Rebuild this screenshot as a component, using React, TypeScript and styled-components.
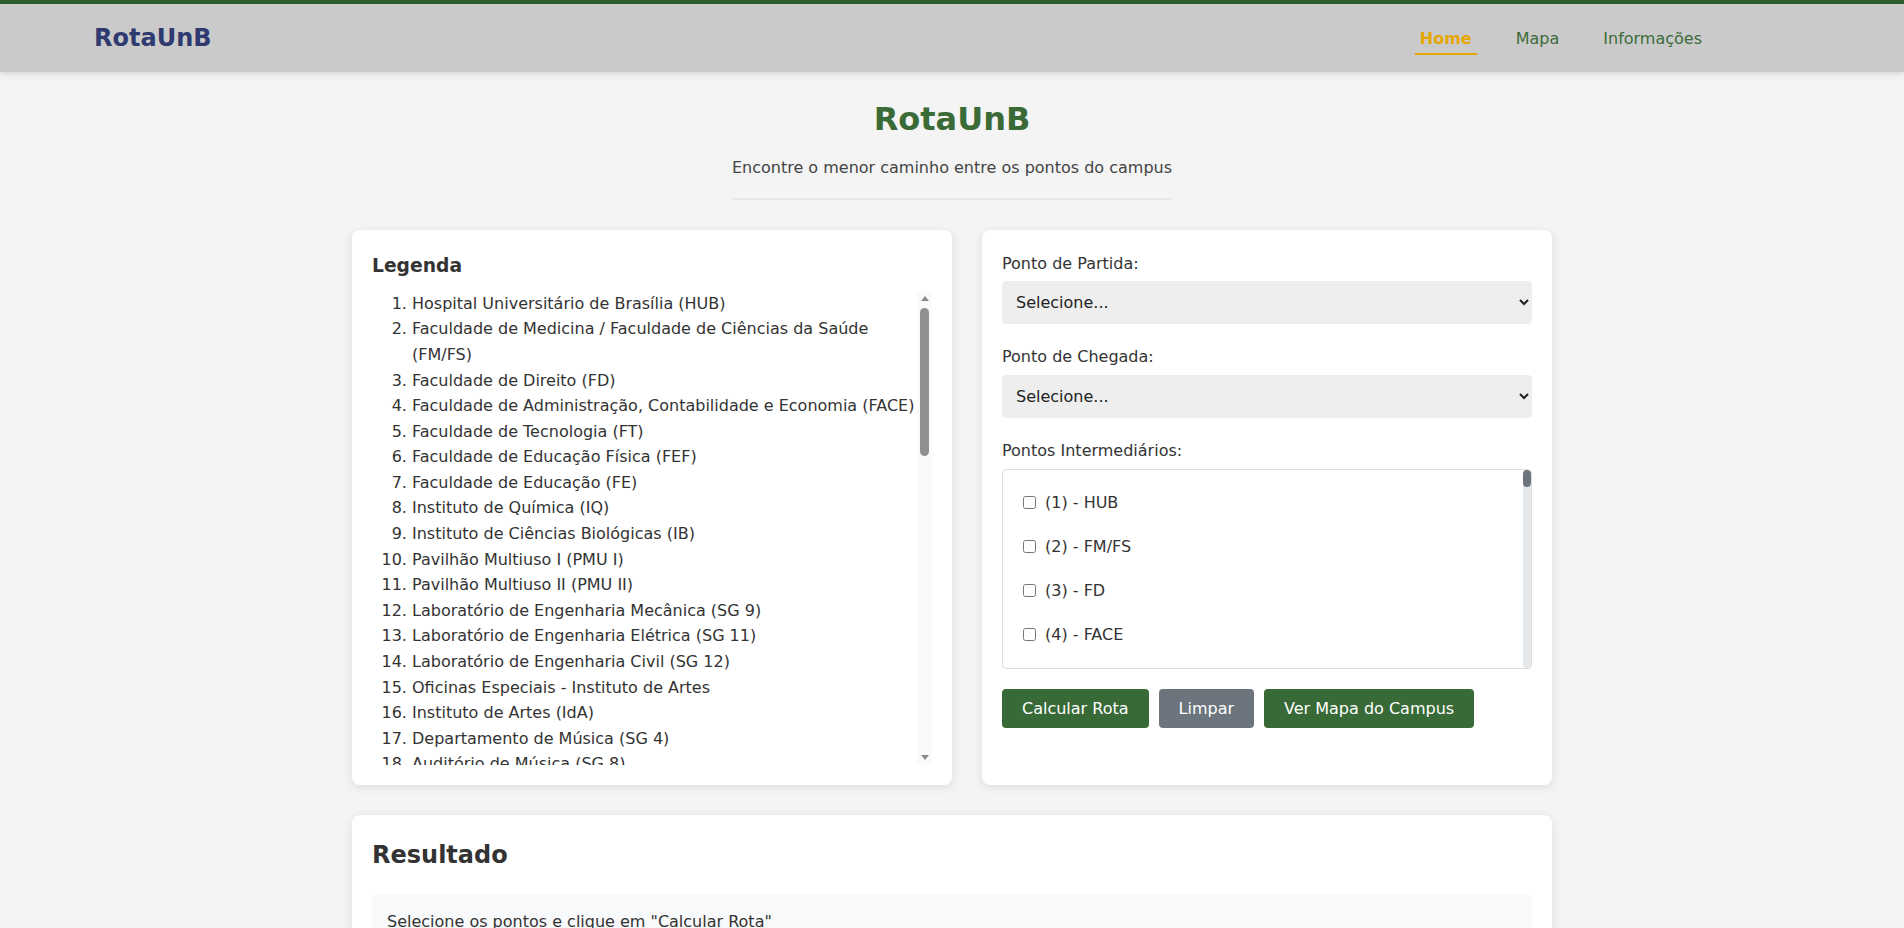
import React from "react";
import styled, { createGlobalStyle } from "styled-components";

const GlobalStyle = createGlobalStyle`
  html { scrollbar-width: none; }
  body {
    margin: 0;
    font-family: "DejaVu Sans", Verdana, sans-serif;
    background: #f4f4f4;
    color: #333;
    line-height: 1.6;
  }
`;

type Point = { name: string; abbr: string };

const POINTS: Point[] = [
  { name: "Hospital Universitário de Brasília (HUB)", abbr: "HUB" },
  { name: "Faculdade de Medicina / Faculdade de Ciências da Saúde (FM/FS)", abbr: "FM/FS" },
  { name: "Faculdade de Direito (FD)", abbr: "FD" },
  { name: "Faculdade de Administração, Contabilidade e Economia (FACE)", abbr: "FACE" },
  { name: "Faculdade de Tecnologia (FT)", abbr: "FT" },
  { name: "Faculdade de Educação Física (FEF)", abbr: "FEF" },
  { name: "Faculdade de Educação (FE)", abbr: "FE" },
  { name: "Instituto de Química (IQ)", abbr: "IQ" },
  { name: "Instituto de Ciências Biológicas (IB)", abbr: "IB" },
  { name: "Pavilhão Multiuso I (PMU I)", abbr: "PMU I" },
  { name: "Pavilhão Multiuso II (PMU II)", abbr: "PMU II" },
  { name: "Laboratório de Engenharia Mecânica (SG 9)", abbr: "SG 9" },
  { name: "Laboratório de Engenharia Elétrica (SG 11)", abbr: "SG 11" },
  { name: "Laboratório de Engenharia Civil (SG 12)", abbr: "SG 12" },
  { name: "Oficinas Especiais - Instituto de Artes", abbr: "OE" },
  { name: "Instituto de Artes (IdA)", abbr: "IdA" },
  { name: "Departamento de Música (SG 4)", abbr: "SG 4" },
  { name: "Auditório de Música (SG 8)", abbr: "SG 8" },
  { name: "Instituto Central de Ciências - Ala Norte (ICC Norte)", abbr: "ICC Norte" },
  { name: "Instituto Central de Ciências - Ala Sul (ICC Sul)", abbr: "ICC Sul" },
  { name: "Biblioteca Central (BCE)", abbr: "BCE" },
  { name: "Restaurante Universitário (RU)", abbr: "RU" },
  { name: "Reitoria", abbr: "Reitoria" },
  { name: "Faculdade de Arquitetura e Urbanismo (FAU)", abbr: "FAU" },
  { name: "Faculdade de Comunicação (FAC)", abbr: "FAC" },
  { name: "Instituto de Ciências Sociais (ICS)", abbr: "ICS" },
  { name: "Instituto de Letras (IL)", abbr: "IL" },
  { name: "Instituto de Psicologia (IP)", abbr: "IP" },
  { name: "Instituto de Física (IF)", abbr: "IF" },
  { name: "Instituto de Geociências (IG)", abbr: "IG" },
  { name: "Departamento de Matemática (MAT)", abbr: "MAT" },
  { name: "Centro Comunitário Athos Bulcão", abbr: "CCAB" },
  { name: "Memorial Darcy Ribeiro (Beijódromo)", abbr: "Beijódromo" },
  { name: "Casa do Estudante Universitário (CEU)", abbr: "CEU" },
  { name: "Centro Olímpico (CO)", abbr: "CO" },
  { name: "Prefeitura do Campus (PRC)", abbr: "PRC" },
  { name: "Centro de Excelência em Turismo (CET)", abbr: "CET" },
  { name: "Faculdade de Ciência da Informação (FCI)", abbr: "FCI" },
  { name: "Instituto de Ciências Humanas (ICH)", abbr: "ICH" },
  { name: "Instituto de Ciência Política (IPOL)", abbr: "IPOL" },
  { name: "Instituto de Relações Internacionais (IREL)", abbr: "IREL" },
  { name: "Faculdade de Agronomia e Medicina Veterinária (FAV)", abbr: "FAV" },
  { name: "Hospital Veterinário (HVet)", abbr: "HVet" },
  { name: "Centro de Desenvolvimento Sustentável (CDS)", abbr: "CDS" },
  { name: "Pavilhão Anísio Teixeira (PAT)", abbr: "PAT" },
  { name: "Pavilhão João Calmon (PJC)", abbr: "PJC" },
  { name: "Núcleo de Medicina Tropical (NMT)", abbr: "NMT" },
  { name: "Departamento de Ciência da Computação (CIC)", abbr: "CIC" },
  { name: "Ponto de Ônibus - L2 Norte", abbr: "L2" },
  { name: "Ceubinho", abbr: "Ceubinho" },
];

const Header = styled.header`
  box-sizing: border-box;
  height: 72px;
  border-top: 4px solid #2d5e2f;
  background: #cacaca;
  padding: 0 94px;
  display: flex;
  align-items: center;
  justify-content: space-between;
  box-shadow: 0 2px 6px rgba(0, 0, 0, 0.12);
  position: relative;
`;

const Logo = styled.div`
  font-size: 24px;
  font-weight: bold;
  color: #2f3a70;
`;

const Nav = styled.nav`
  display: flex;
  gap: 34px;
  margin-right: 103px;
`;

const NavLink = styled.a<{ $active?: boolean }>`
  font-size: 16px;
  text-decoration: none;
  padding: 5px 5px 2px;
  border-bottom: 2px solid ${(p) => (p.$active ? "#e5a600" : "transparent")};
  color: ${(p) => (p.$active ? "#e5a600" : "#3c6b3c")};
  font-weight: ${(p) => (p.$active ? "bold" : "normal")};
  cursor: pointer;
`;

const Main = styled.main`
  max-width: 1200px;
  margin: 0 auto;
`;

const Intro = styled.section`
  display: flex;
  flex-direction: column;
  align-items: center;
  margin-top: 22px;
`;

const IntroInner = styled.div`
  width: fit-content;
  text-align: center;
  border-bottom: 2px solid #e8e8e8;
  padding-bottom: 17px;
  margin-bottom: 30px;
`;

const Title = styled.h1`
  margin: 0;
  font-size: 32px;
  color: #3a6b37;
`;

const Subtitle = styled.p`
  margin: 10px 0 0;
  font-size: 16px;
  color: #444;
`;

const Columns = styled.div`
  display: grid;
  grid-template-columns: 600px 1fr;
  gap: 30px;
`;

const Card = styled.div`
  background: #fff;
  border-radius: 8px;
  padding: 21px 20px 20px;
  box-shadow: 0 2px 10px rgba(0, 0, 0, 0.1);
`;

const ResultCard = styled(Card)`
  margin-top: 30px;
`;

const CardTitle = styled.h3`
  margin: 0 0 10px;
  font-size: 18.72px;
  color: #333;
`;

const LegendScroll = styled.div`
  display: flex;
  height: 474px;
`;

const LegendList = styled.ol`
  flex: 1;
  margin: 0;
  padding-left: 40px;
  overflow: hidden;
  font-size: 16px;
`;

const ClassicTrack = styled.div`
  width: 15px;
  flex: none;
  background: #fafafa;
  display: flex;
  flex-direction: column;
  align-items: center;
`;

const ArrowButton = styled.div`
  height: 15px;
  flex: none;
  display: flex;
  align-items: center;
  justify-content: center;
`;

const ClassicThumb = styled.div<{ $offset: number; $size: number }>`
  width: 9px;
  height: ${(p) => p.$size}px;
  margin-top: ${(p) => p.$offset}px;
  border-radius: 5px;
  background: #8f8f8f;
`;

const TrackSpace = styled.div`
  flex: 1;
`;

const FormGroup = styled.div`
  margin-bottom: 20px;
`;

const Label = styled.label`
  display: block;
  margin-bottom: 5px;
  font-size: 16px;
  color: #333;
`;

const Select = styled.select`
  width: 100%;
  height: 43px;
  box-sizing: border-box;
  padding: 0 10px;
  background-color: #eee;
  border: none;
  border-radius: 4px;
  font-family: "DejaVu Sans", Verdana, sans-serif;
  font-size: 16px;
  color: #222;
`;

const CheckBox = styled.div`
  box-sizing: border-box;
  height: 200px;
  border: 1px solid #ddd;
  border-radius: 4px;
  display: flex;
  overflow: hidden;
`;

const CheckList = styled.div`
  flex: 1;
  overflow: hidden;
  padding: 11px 10px;
`;

const SlimTrack = styled.div`
  width: 8px;
  flex: none;
  background: #e6e9ec;
  border-radius: 4px;
`;

const SlimThumb = styled.div`
  height: 17px;
  border-radius: 4px;
  background: #6c757d;
`;

const CheckItem = styled.label`
  display: flex;
  align-items: center;
  height: 44px;
  padding: 0 6px;
  font-size: 16px;
  color: #333;

  input {
    margin: 3px 9px 3px 4px;
    width: 13px;
    height: 13px;
  }
`;

const ButtonRow = styled.div`
  display: flex;
  gap: 10px;
`;

const Button = styled.button<{ $variant?: "primary" | "secondary" }>`
  padding: 10px 20px;
  border: none;
  border-radius: 4px;
  background: ${(p) => (p.$variant === "secondary" ? "#6c757d" : "#376a37")};
  color: #fff;
  font-family: "DejaVu Sans", Verdana, sans-serif;
  font-size: 16px;
  line-height: normal;
  cursor: pointer;
`;

const ResultTitle = styled.h2`
  margin: 0 0 20px;
  font-size: 24px;
  color: #333;
`;

const ResultBox = styled.div`
  background: #f8f9fa;
  border-radius: 4px;
  padding: 15px;
  min-height: 60px;
`;

const ResultText = styled.p`
  margin: 0;
  font-size: 16px;
  color: #333;
`;

function Arrow({ dir }: { dir: "up" | "down" }) {
  return (
    <ArrowButton>
      <svg width="8" height="5" viewBox="0 0 8 5">
        <polygon
          points={dir === "up" ? "0,5 8,5 4,0" : "0,0 8,0 4,5"}
          fill="#8a8a8a"
        />
      </svg>
    </ArrowButton>
  );
}

export default function App() {
  return (
    <>
      <GlobalStyle />
      <Header>
        <Logo>RotaUnB</Logo>
        <Nav>
          <NavLink $active>Home</NavLink>
          <NavLink>Mapa</NavLink>
          <NavLink>Informações</NavLink>
        </Nav>
      </Header>
      <Main>
        <Intro>
          <IntroInner>
            <Title>RotaUnB</Title>
            <Subtitle>Encontre o menor caminho entre os pontos do campus</Subtitle>
          </IntroInner>
        </Intro>
        <Columns>
          <Card>
            <CardTitle>Legenda</CardTitle>
            <LegendScroll>
              <LegendList>
                {POINTS.map((p) => (
                  <li key={p.name}>{p.name}</li>
                ))}
              </LegendList>
              <ClassicTrack>
                <Arrow dir="up" />
                <ClassicThumb $offset={2} $size={148} />
                <TrackSpace />
                <Arrow dir="down" />
              </ClassicTrack>
            </LegendScroll>
          </Card>
          <Card>
            <FormGroup>
              <Label htmlFor="partida">Ponto de Partida:</Label>
              <Select id="partida" defaultValue="">
                <option value="">Selecione...</option>
                {POINTS.map((p, i) => (
                  <option key={p.name} value={i + 1}>
                    ({i + 1}) - {p.abbr}
                  </option>
                ))}
              </Select>
            </FormGroup>
            <FormGroup>
              <Label htmlFor="chegada">Ponto de Chegada:</Label>
              <Select id="chegada" defaultValue="">
                <option value="">Selecione...</option>
                {POINTS.map((p, i) => (
                  <option key={p.name} value={i + 1}>
                    ({i + 1}) - {p.abbr}
                  </option>
                ))}
              </Select>
            </FormGroup>
            <FormGroup>
              <Label>Pontos Intermediários:</Label>
              <CheckBox>
                <CheckList>
                  {POINTS.slice(0, 5).map((p, i) => (
                    <CheckItem key={p.name}>
                      <input type="checkbox" />
                      ({i + 1}) - {p.abbr}
                    </CheckItem>
                  ))}
                </CheckList>
                <SlimTrack>
                  <SlimThumb />
                </SlimTrack>
              </CheckBox>
            </FormGroup>
            <ButtonRow>
              <Button>Calcular Rota</Button>
              <Button $variant="secondary">Limpar</Button>
              <Button>Ver Mapa do Campus</Button>
            </ButtonRow>
          </Card>
        </Columns>
        <ResultCard>
          <ResultTitle>Resultado</ResultTitle>
          <ResultBox>
            <ResultText>Selecione os pontos e clique em "Calcular Rota"</ResultText>
          </ResultBox>
        </ResultCard>
      </Main>
    </>
  );
}
